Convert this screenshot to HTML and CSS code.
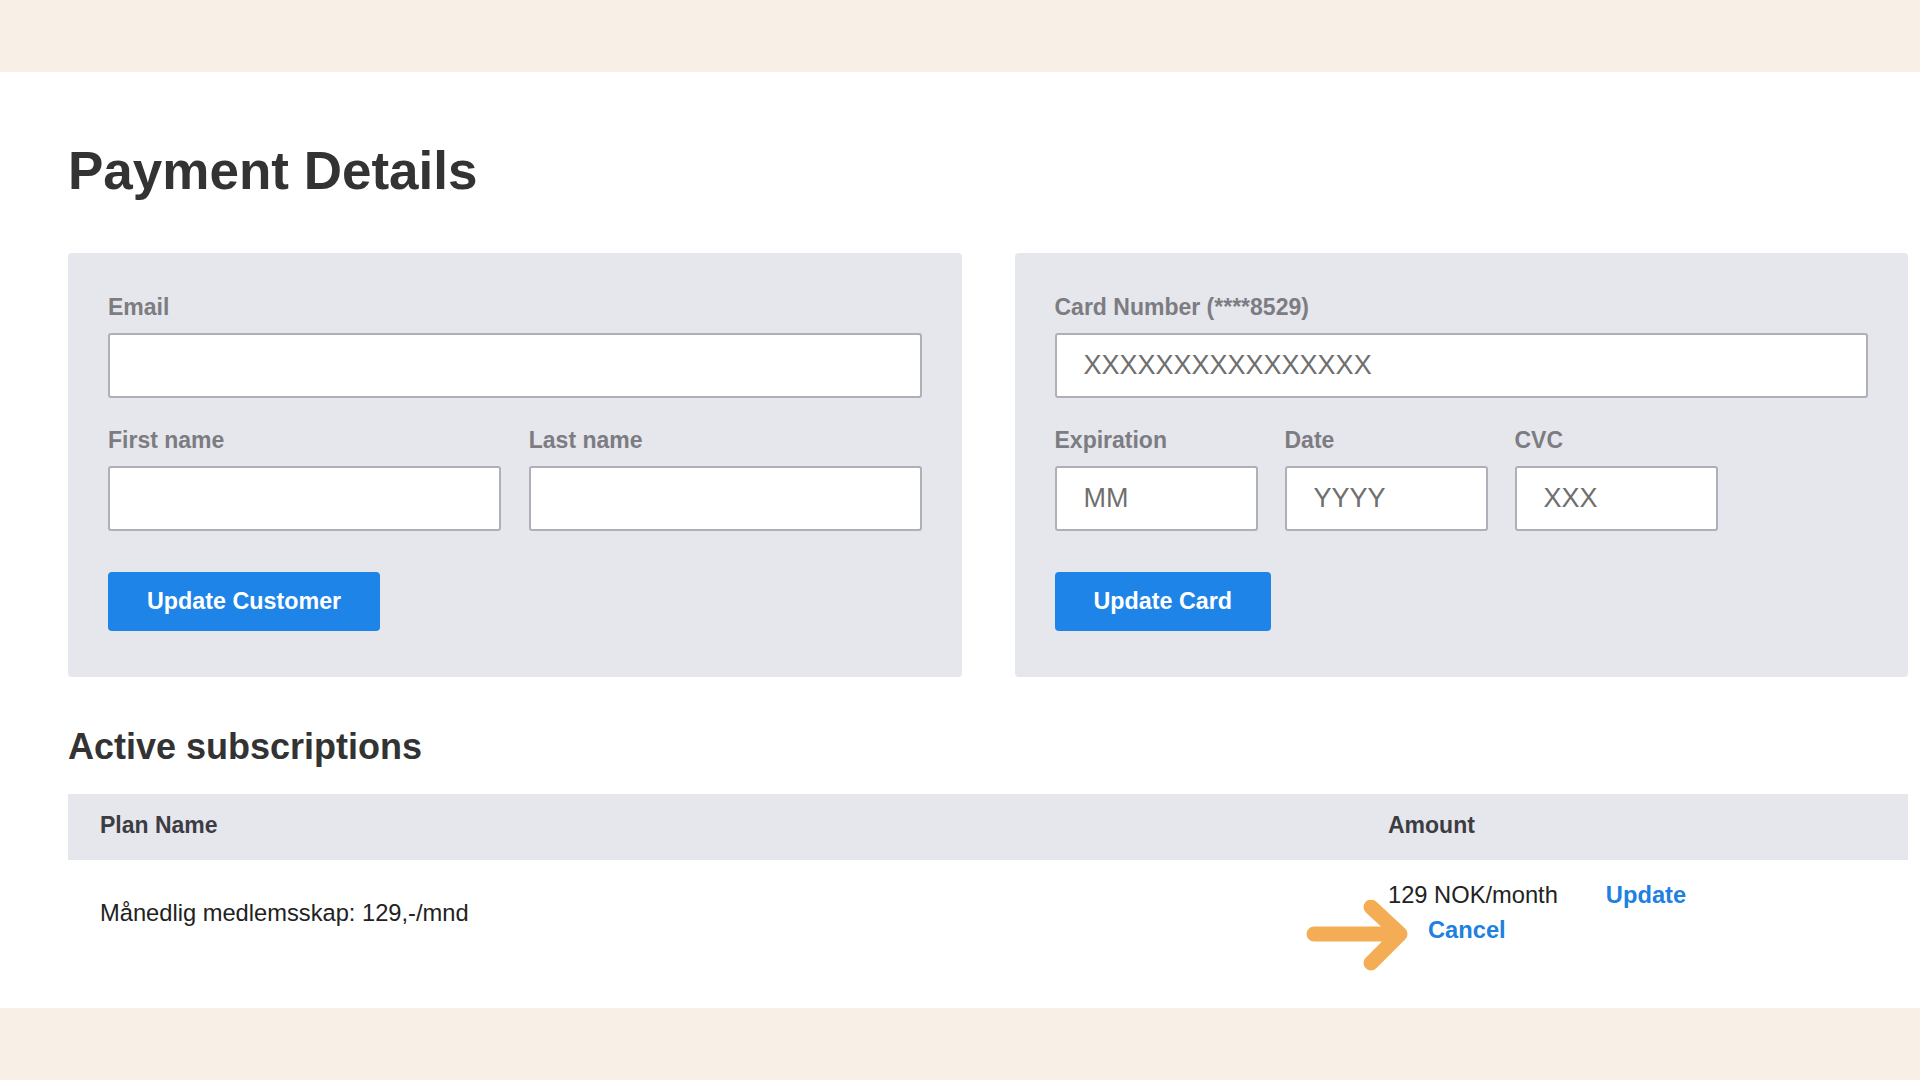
FILE: index.html
```html
<!DOCTYPE html>
<html lang="en">
<head>
<meta charset="utf-8">
<title>Payment Details</title>
<link rel="stylesheet" href="styles.css">
</head>
<body>
<main class="page">
  <h1 class="title">Payment Details</h1>
  <div class="cards">
    <section class="card">
      <div class="field">
        <label class="label">Email</label>
        <input class="input" type="text">
      </div>
      <div class="row">
        <div class="field half">
          <label class="label">First name</label>
          <input class="input" type="text">
        </div>
        <div class="field half">
          <label class="label">Last name</label>
          <input class="input" type="text">
        </div>
      </div>
      <button class="btn">Update Customer</button>
    </section>
    <section class="card">
      <div class="field">
        <label class="label">Card Number (****8529)</label>
        <input class="input" type="text" placeholder="XXXXXXXXXXXXXXXX">
      </div>
      <div class="row row-small">
        <div class="field small">
          <label class="label">Expiration</label>
          <input class="input" type="text" placeholder="MM">
        </div>
        <div class="field small">
          <label class="label">Date</label>
          <input class="input" type="text" placeholder="YYYY">
        </div>
        <div class="field small">
          <label class="label">CVC</label>
          <input class="input" type="text" placeholder="XXX">
        </div>
      </div>
      <button class="btn">Update Card</button>
    </section>
  </div>

  <h2 class="subtitle">Active subscriptions</h2>
  <div class="table">
    <div class="thead">
      <div class="th th-plan">Plan Name</div>
      <div class="th">Amount</div>
    </div>
    <div class="tr">
      <div class="td td-plan">Månedlig medlemsskap: 129,-/mnd</div>
      <div class="td td-amount">
        <div class="amount-line">129 NOK/month<a class="link link-update" href="#">Update</a></div>
        <div class="amount-line"><a class="link link-cancel" href="#">Cancel</a></div>
      </div>
      <svg class="arrow" width="110" height="80" viewBox="0 0 110 80" aria-hidden="true">
        <path d="M14 34 L100 34 M71 7 L100 34 L71 63" fill="none" stroke="#f4ad55" stroke-width="15" stroke-linecap="round" stroke-linejoin="round"/>
      </svg>
    </div>
  </div>
</main>
</body>
</html>
```

FILE: styles.css
```css
* {
  box-sizing: border-box;
}

html, body {
  margin: 0;
  padding: 0;
}

body {
  background: #f8efe6;
  font-family: "Liberation Sans", Arial, Helvetica, sans-serif;
  height: 1080px;
  overflow: hidden;
}

.page {
  margin-top: 72px;
  height: 936px;
  background: #ffffff;
  padding: 68px 0 0 68px;
  overflow: hidden;
}

.title {
  margin: 0;
  font-size: 53px;
  line-height: 61px;
  font-weight: 700;
  color: #333333;
}

.cards {
  display: flex;
  gap: 53px;
  margin-top: 52px;
  width: 1840px;
}

.card {
  width: 894px;
  background: #e6e7ec;
  border-radius: 4px;
  padding: 40px 40px 46px;
}

.field {
  display: flex;
  flex-direction: column;
}

.label {
  font-size: 23px;
  line-height: 28px;
  font-weight: 700;
  color: #7c7c82;
  margin-bottom: 12px;
}

.input {
  width: 100%;
  height: 65px;
  border: 2px solid #afafba;
  border-radius: 3px;
  background: #ffffff;
  padding: 0 27px;
  font-family: "Liberation Sans", Arial, sans-serif;
  font-size: 27px;
  color: #333;
  outline: none;
}

.input::placeholder {
  color: #6f6f6f;
  opacity: 1;
}

.row {
  display: flex;
  gap: 28px;
  margin-top: 28px;
}

.half {
  flex: 1 1 0;
}

.row-small {
  gap: 27px;
}

.small {
  width: 203px;
}

.btn {
  display: block;
  margin-top: 41px;
  height: 59px;
  padding: 0 39px;
  border: none;
  border-radius: 4px;
  background: #1f84e7;
  color: #ffffff;
  font-family: "Liberation Sans", Arial, sans-serif;
  font-size: 23.3px;
  font-weight: 700;
  cursor: pointer;
}

.subtitle {
  margin: 49px 0 0;
  font-size: 36px;
  line-height: 42px;
  font-weight: 700;
  color: #333333;
}

.table {
  margin-top: 26px;
  width: 1840px;
}

.thead,
.tr {
  display: grid;
  grid-template-columns: 1320px 1fr;
}

.thead {
  background: #e6e7ec;
  height: 66px;
  align-items: center;
  padding-bottom: 4px;
}

.th {
  font-size: 23px;
  line-height: 28px;
  font-weight: 700;
  color: #3c3d43;
}

.th-plan,
.td-plan {
  padding-left: 32px;
}

.tr {
  position: relative;
  align-items: center;
  padding: 18px 0;
}

.td {
  font-size: 23.7px;
  line-height: 35px;
  color: #222222;
}

.amount-line {
  white-space: nowrap;
}

.link {
  color: #1e80e0;
  font-weight: 700;
  text-decoration: none;
}

.link-update {
  margin-left: 48px;
}

.link-cancel {
  margin-left: 40px;
}

.arrow {
  position: absolute;
  left: 1232px;
  top: 40px;
}
```
